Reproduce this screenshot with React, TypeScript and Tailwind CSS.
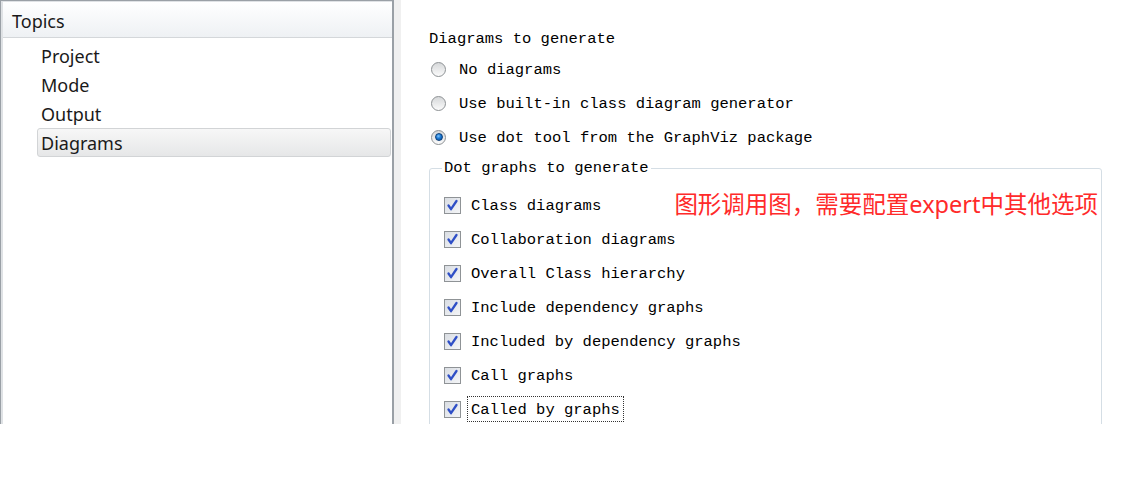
import React from 'react'

const topics = ['Project', 'Mode', 'Output', 'Diagrams']

const radios = [
  { label: 'No diagrams', checked: false },
  { label: 'Use built-in class diagram generator', checked: false },
  { label: 'Use dot tool from the GraphViz package', checked: true },
]

const graphs = [
  'Class diagrams',
  'Collaboration diagrams',
  'Overall Class hierarchy',
  'Include dependency graphs',
  'Included by dependency graphs',
  'Call graphs',
  'Called by graphs',
]

function Radio({ checked }: { checked: boolean }) {
  return (
    <div className="flex h-[15px] w-[15px] shrink-0 items-center justify-center rounded-full border border-[#8d9194] bg-gradient-to-b from-[#d6d8da] to-[#fbfbfb]">
      {checked && (
        <div className="h-[8px] w-[8px] rounded-full border border-[#0d3f7a] bg-[radial-gradient(circle_at_40%_35%,#7cc4ff_0%,#1a78d2_45%,#0b4a92_100%)]" />
      )}
    </div>
  )
}

function Checkbox() {
  return (
    <div className="flex h-[17px] w-[17px] shrink-0 items-center justify-center border border-[#8f9396] bg-gradient-to-br from-[#d9dde3] to-[#f4f5f7]">
      <svg width="13" height="13" viewBox="0 0 13 13">
        <path d="M2.5 6.5 L5 10.2 L10.5 2" fill="none" stroke="#2f4fc6" strokeWidth="2.3" strokeLinecap="round" strokeLinejoin="round" />
      </svg>
    </div>
  )
}

export default function App() {
  return (
    <div className="h-[484px] w-[1123px] bg-white">
      <div className="flex h-[424px] overflow-hidden">
        {/* Topics tree */}
        <div className="flex w-[394px] shrink-0 border-l border-t border-r-2 border-[#9aa0a6]">
          <div className="flex flex-1 flex-col border-l-2 border-t border-[#dfe2e5]">
            <div className="flex h-[36px] items-center border-b border-[#d4d7da] bg-gradient-to-b from-[#ffffff] to-[#eef1f4] pl-[9px] pt-[3px] font-['Noto_Sans',sans-serif] text-[18px] text-[#1a1a1a]">
              Topics
            </div>
            <div className="flex flex-col pt-[3px] pl-[34px] pr-[1px]">
              {topics.map((t) => (
                <div
                  key={t}
                  className={
                    t === 'Diagrams'
                      ? "flex h-[29px] items-center rounded-[3px] border border-[#d2d4d6] bg-gradient-to-b from-[#f7f7f7] to-[#e6e7e8] pl-[3px] pt-[1px] font-['Noto_Sans',sans-serif] text-[18px] text-[#1a1a1a]"
                      : "flex h-[29px] items-center border border-transparent pl-[3px] pt-[1px] font-['Noto_Sans',sans-serif] text-[18px] text-[#1a1a1a]"
                  }
                >
                  {t}
                </div>
              ))}
            </div>
          </div>
        </div>

        {/* Splitter */}
        <div className="w-[7px] shrink-0 bg-[#f0f0f0]" />

        {/* Diagrams page */}
        <div className="flex flex-1 flex-col pt-[28px] pl-[28px] font-['Liberation_Mono',monospace] text-[15.5px] text-black">
          <div className="flex h-[20px] items-center pt-[4px]">Diagrams to generate</div>
          <div className="mt-[4px] flex flex-col">
            {radios.map((r) => (
              <div key={r.label} className="flex h-[34px] items-center gap-[13px] pl-[2px]">
                <Radio checked={r.checked} />
                <span className="pt-[4px]">{r.label}</span>
              </div>
            ))}
          </div>
          <fieldset className="mt-[4px] mr-[21px] min-w-0 rounded-[3px] border border-[#d5dee5] pl-[14px] pr-[3px] pt-[10px]">
            <legend className="-ml-[2px] px-[2px] leading-[20px]">Dot graphs to generate</legend>
            {graphs.map((g, i) => (
              <div key={g} className="flex h-[34px] items-center">
                <Checkbox />
                {i === graphs.length - 1 ? (
                  <span className="ml-[6px] border border-dotted border-[#333] px-[3px] pt-[3px] leading-[21px]">{g}</span>
                ) : (
                  <span className="ml-[10px] pt-[4px]">{g}</span>
                )}
                {i === 0 && (
                  <span className="ml-auto font-['Noto_Sans','Noto_Sans_CJK_SC',sans-serif] text-[23.5px] leading-none text-[#ff2a2a]">
                    图形调用图，需要配置expert中其他选项
                  </span>
                )}
              </div>
            ))}
          </fieldset>
        </div>
      </div>
    </div>
  )
}
